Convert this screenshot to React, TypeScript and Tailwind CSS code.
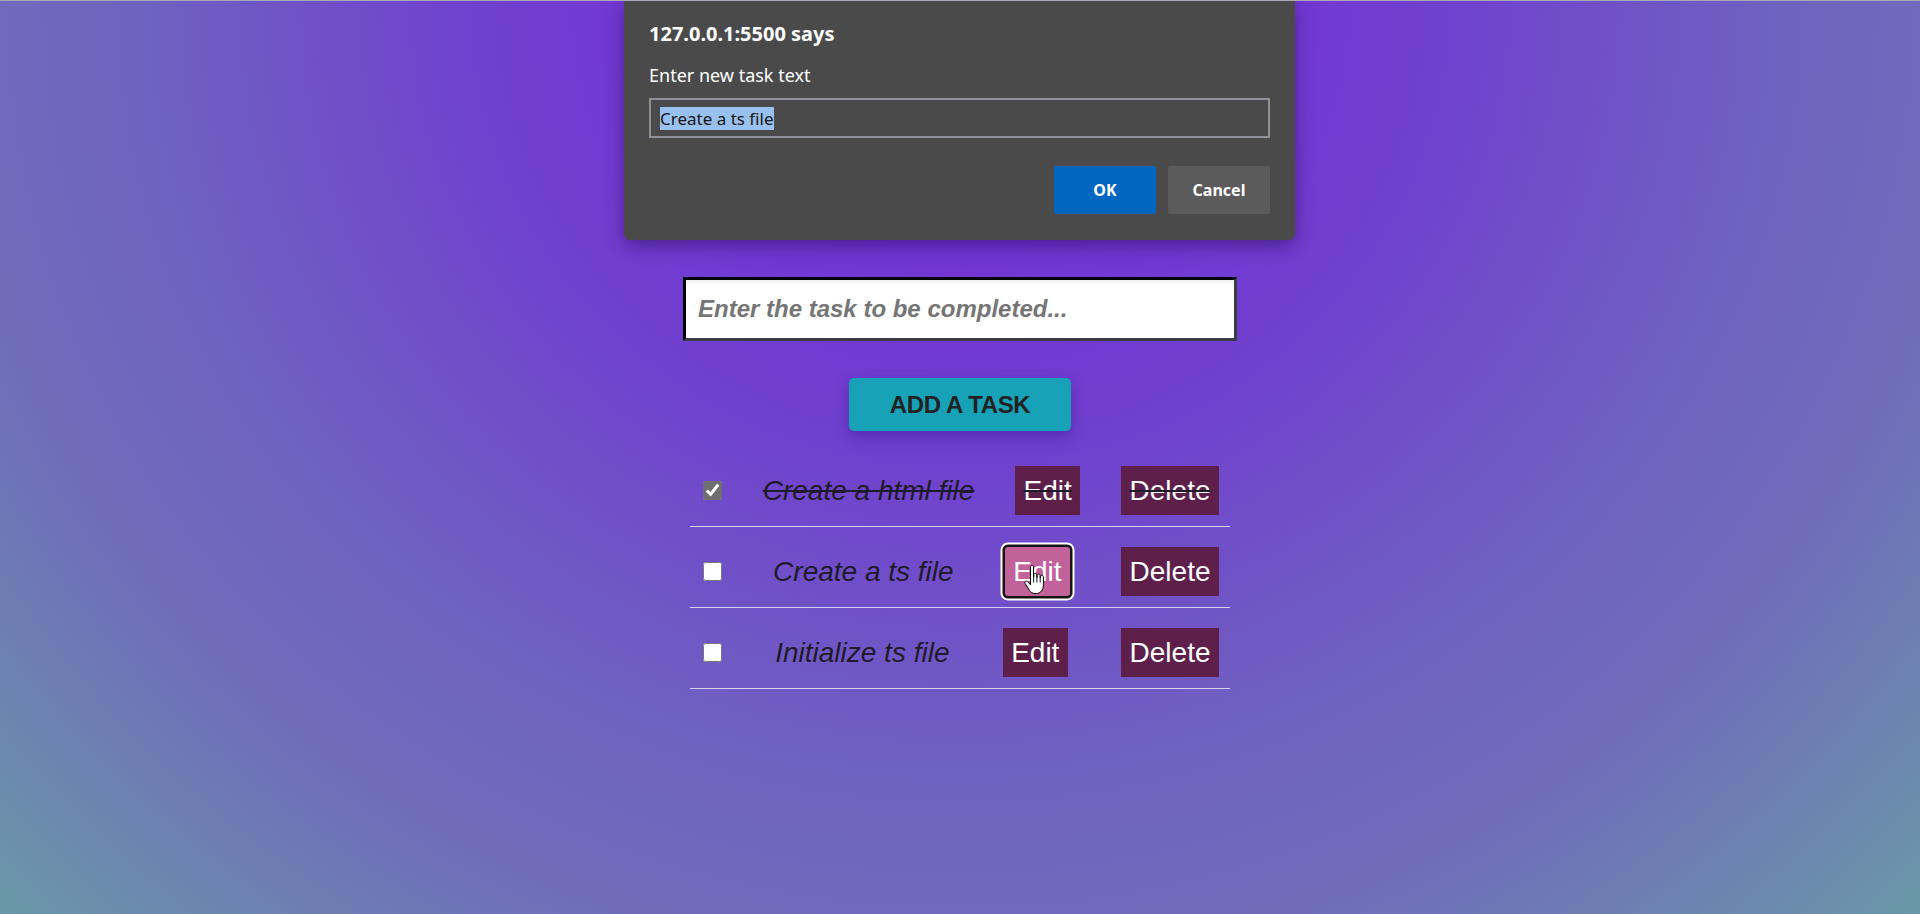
import { useState } from "react"

interface Task {
    id: number
    text: string
    done: boolean
}

const initialTasks: Task[] = [
    { id: 1, text: "Create a html file", done: true },
    { id: 2, text: "Create a ts file", done: false },
    { id: 3, text: "Initialize ts file", done: false },
]

function HandCursor() {
    return (
        <svg
            className="absolute left-[19px] top-[18px] pointer-events-none"
            width="22"
            height="32"
            viewBox="0 0 22 32"
        >
            <path
                d="M6.5 2c0-1 .7-1.6 1.5-1.6S9.5 1 9.5 2v10.5h.3V10c0-1 .7-1.6 1.5-1.6s1.5.6 1.5 1.6v2.7h.3v-2c0-1 .7-1.6 1.5-1.6s1.5.6 1.5 1.6v2.4h.3v-1.2c0-1 .7-1.6 1.5-1.6s1.5.6 1.5 1.6V20c0 4.8-2.8 8.5-7 8.5H11c-2.6 0-4.2-1.2-5.6-3.2L1.2 18.6c-.6-.8-.4-1.8.3-2.3.8-.5 1.8-.3 2.3.4L6.5 20Z"
                fill="#fff"
                stroke="#000"
                strokeWidth="1"
                strokeLinejoin="round"
            />
            <path d="M9.6 12.5v5M12.9 12.7v4.8M16.2 13.1v4.4" stroke="#000" strokeWidth="0.9" />
        </svg>
    )
}

export default function App() {
    const [tasks, setTasks] = useState<Task[]>(initialTasks)
    const [draft, setDraft] = useState("")

    function toggle(id: number) {
        setTasks(ts => ts.map(t => (t.id === id ? { ...t, done: !t.done } : t)))
    }

    return (
        <div className="relative h-[914px] w-full overflow-hidden border-t border-[#a9a9b4] bg-[radial-gradient(ellipse_at_top,#7627dc_0%,#7040cf_35%,#6f62c0_60%,#6f6dba_75%,#6a98a8_100%)] font-['Liberation_Sans',Arial,sans-serif]">
            {/* page content */}
            <div className="flex flex-col items-center pt-[276px]">
                <input
                    type="text"
                    value={draft}
                    onChange={e => setDraft(e.target.value)}
                    placeholder="Enter the task to be completed..."
                    className="box-border h-[64px] w-[554px] border-[3px] border-t-black border-l-black border-b-[#3c3c44] border-r-[#3c3c44] bg-white px-[12px] text-[24px] font-bold italic text-[#222] shadow-[inset_0_5px_6px_-3px_rgba(0,0,0,0.08)] outline-none placeholder:text-[#757575]"
                />

                <button className="mt-[37px] h-[53px] w-[222px] rounded-[5px] bg-[#17a2b8] text-[24px] font-bold tracking-[-0.4px] text-[#222] shadow-[0_6px_14px_rgba(60,20,140,0.45)]">
                    ADD A TASK
                </button>

                <ul className="mt-[15px] w-[540px]">
                    {tasks.map(task => (
                        <li
                            key={task.id}
                            className="flex items-center justify-between border-b border-[#d9cff0] pt-[20px] pb-[11px] pl-[13px] pr-[11px]"
                        >
                            <input
                                type="checkbox"
                                checked={task.done}
                                onChange={() => toggle(task.id)}
                                className="h-[19px] w-[19px] accent-[#6f6f6f]"
                            />
                            <span
                                className={
                                    task.done
                                        ? "text-[28px] italic text-[#1f1b2a] line-through decoration-[#1f1b2a]"
                                        : "text-[28px] italic text-[#1f1b2a]"
                                }
                            >
                                {task.text}
                            </span>
                            <div className="relative">
                                <button
                                    className={
                                        task.id === 2
                                            ? "h-[49px] rounded-[3px] bg-[#c2629a] px-[8.5px] text-[28px] text-white shadow-[0_0_0_2.5px_#141414,0_0_0_4.5px_#ffffff]"
                                            : task.done
                                              ? "h-[49px] bg-[#5e1f4b] px-[8.5px] text-[28px] text-white line-through decoration-[#1f1b2a]"
                                              : "h-[49px] bg-[#5e1f4b] px-[8.5px] text-[28px] text-white"
                                    }
                                >
                                    Edit
                                </button>
                                {task.id === 2 && <HandCursor />}
                            </div>
                            <button
                                className={
                                    task.done
                                        ? "h-[49px] bg-[#5e1f4b] px-[8.5px] text-[28px] text-white line-through decoration-[#1f1b2a]"
                                        : "h-[49px] bg-[#5e1f4b] px-[8.5px] text-[28px] text-white"
                                }
                            >
                                Delete
                            </button>
                        </li>
                    ))}
                </ul>
            </div>

            {/* browser prompt dialog over the page */}
            <div className="absolute left-[624px] top-0 flex h-[239px] w-[671px] flex-col rounded-b-[6px] bg-[#4a4a4a] px-[25px] pt-[18px] font-['Noto_Sans','Open_Sans',sans-serif] text-white shadow-[0_6px_18px_rgba(30,0,70,0.45)]">
                <p className="text-[20px] font-bold leading-[30px]">127.0.0.1:5500 says</p>
                <p className="mt-[13px] text-[18px] leading-[26px]">Enter new task text</p>
                <div className="mt-[10px] flex h-[40px] items-center border-2 border-[#8e9298] px-[9px]">
                    <span className="bg-[#99c1ef] text-[17px] leading-[23px] text-[#161616]">Create a ts file</span>
                </div>
                <div className="mt-[28px] flex justify-end gap-[12px]">
                    <button className="h-[48px] w-[102px] rounded-[2px] bg-[#0067c0] text-[16px] font-bold text-white">
                        OK
                    </button>
                    <button className="h-[48px] w-[102px] rounded-[2px] bg-[#5b5b5b] text-[16px] font-bold text-white">
                        Cancel
                    </button>
                </div>
            </div>
        </div>
    )
}
